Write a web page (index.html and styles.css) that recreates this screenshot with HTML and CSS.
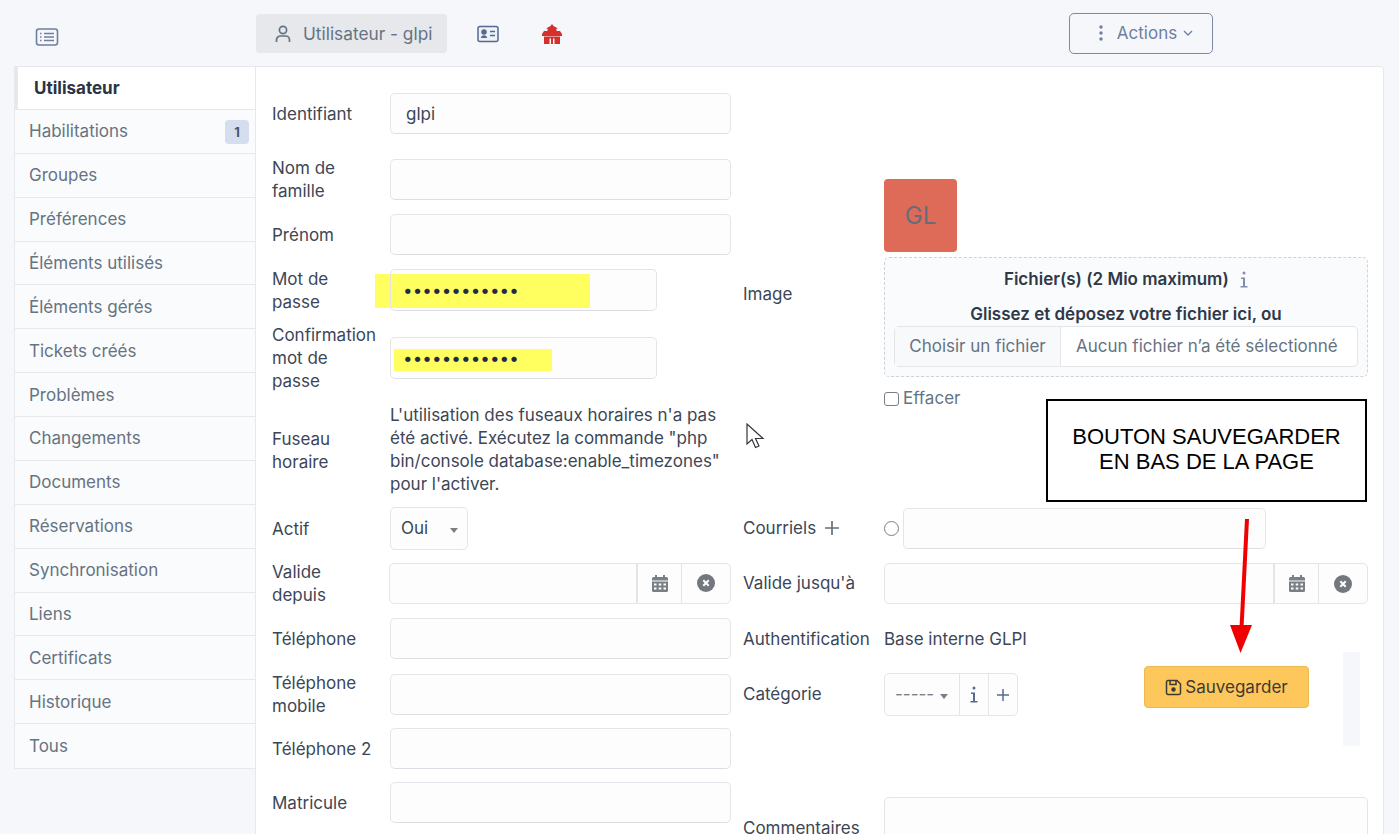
FILE: index.html
```html
<!DOCTYPE html>
<html lang="fr">
<head>
    <meta charset="UTF-8">
    <title>Utilisateur - glpi</title>
    <link rel="stylesheet" href="styles.css">
</head>
<body>

    <header class="topbar">
        <div class="topbar-toggle">
            <svg width="24" height="20" viewBox="0 0 24 20" fill="none" stroke="#6f7f9e" stroke-width="1.6">
                <rect x="1.5" y="2" width="21" height="16" rx="2.5"/>
                <path d="M5 6.5h1.5M5 10h1.5M5 13.5h1.5M9 6.5h10M9 10h10M9 13.5h10"/>
            </svg>
        </div>
        <div class="topbar-tab active">
            <svg width="18" height="20" viewBox="0 0 18 20" fill="none" stroke="#667382" stroke-width="1.7">
                <circle cx="9" cy="6" r="3.6"/>
                <path d="M2.5 18v-2a4 4 0 0 1 4-4h5a4 4 0 0 1 4 4v2"/>
            </svg>
            <span>Utilisateur - glpi</span>
        </div>
        <div class="topbar-tab">
            <svg width="22" height="18" viewBox="0 0 22 18" fill="#edf1f9" stroke="#566a8e" stroke-width="1.5">
                <rect x="1" y="1.5" width="20" height="15" rx="2"/>
                <circle cx="7" cy="7" r="2" fill="#566a8e"/>
                <path d="M3.8 13c.4-2 1.6-2.8 3.2-2.8s2.8.8 3.2 2.8z" fill="#566a8e" stroke="none"/>
                <path d="M13 6.5h5M13 10.5h5"/>
            </svg>
        </div>
        <div class="topbar-tab">
            <svg width="20" height="22" viewBox="0 0 20 22" fill="#d5302c">
                <path d="M10 1l1.500 2 4.500 2.500h-1.500v2.500h3.500l2 3v2h-20v-2l2-3h3.500v-2.500h-1.500l4.500-2.500z"/>
                <path fill-rule="evenodd" d="M2 13.500h16v7.500h-16zM7.500 15.500v5.500h1.500v-5.500zM11 15.500v5.500h1.500v-5.500z"/>
            </svg>
        </div>
        <button class="actions-btn" type="button">
            <svg width="4" height="16" viewBox="0 0 4 16" fill="#6f7f9e">
                <circle cx="2" cy="2" r="1.7"/><circle cx="2" cy="8" r="1.7"/><circle cx="2" cy="14" r="1.7"/>
            </svg>
            <span>Actions</span>
            <svg width="10" height="6" viewBox="0 0 10 6" fill="none" stroke="#6f7f9e" stroke-width="1.3">
                <path d="M1 1l4 4 4-4"/>
            </svg>
        </button>
    </header>

    <div class="layout">
        <nav class="sidebar">
            <a class="side-item active">Utilisateur</a>
            <a class="side-item">Habilitations <span class="badge">1</span></a>
            <a class="side-item">Groupes</a>
            <a class="side-item">Préférences</a>
            <a class="side-item">Éléments utilisés</a>
            <a class="side-item">Éléments gérés</a>
            <a class="side-item">Tickets créés</a>
            <a class="side-item">Problèmes</a>
            <a class="side-item">Changements</a>
            <a class="side-item">Documents</a>
            <a class="side-item">Réservations</a>
            <a class="side-item">Synchronisation</a>
            <a class="side-item">Liens</a>
            <a class="side-item">Certificats</a>
            <a class="side-item">Historique</a>
            <a class="side-item">Tous</a>
        </nav>

        <main class="panel">
            <div class="col col-left">
                <div class="row row-first">
                    <label>Identifiant</label>
                    <input type="text" value="glpi">
                </div>
                <div class="row row-name">
                    <label>Nom de famille</label>
                    <input type="text">
                </div>
                <div class="row">
                    <label>Prénom</label>
                    <input type="text">
                </div>
                <div class="row row-pw">
                    <label>Mot de passe</label>
                    <div class="pw-field">
                        <span class="marker marker-one"></span>
                        <input type="password" value="aaaaaaaaaaaa">
                    </div>
                </div>
                <div class="row">
                    <label>Confirmation mot de passe</label>
                    <div class="pw-field">
                        <span class="marker marker-two"></span>
                        <input type="password" value="aaaaaaaaaaaa">
                    </div>
                </div>
                <div class="row row-tz">
                    <label>Fuseau horaire</label>
                    <p class="tz-note">L'utilisation des fuseaux horaires n'a pas été activé. Exécutez la commande "php bin/console database:enable_timezones" pour l'activer.</p>
                </div>
                <div class="row">
                    <label>Actif</label>
                    <div class="select select-yes">Oui <i class="caret"></i></div>
                </div>
                <div class="row row-since">
                    <label>Valide depuis</label>
                    <div class="date-group date-left">
                        <div class="date-input"></div>
                        <div class="date-btn cal-btn">
                            <svg width="16" height="17" viewBox="0 0 16 17"><use href="#cal"/></svg>
                        </div>
                        <div class="date-btn clear-btn">
                            <svg width="18" height="18" viewBox="0 0 18 18"><use href="#clear"/></svg>
                        </div>
                    </div>
                </div>
                <div class="row">
                    <label>Téléphone</label>
                    <input type="text">
                </div>
                <div class="row row-mobile">
                    <label>Téléphone mobile</label>
                    <input type="text">
                </div>
                <div class="row">
                    <label>Téléphone 2</label>
                    <input type="text">
                </div>
                <div class="row row-number">
                    <label>Matricule</label>
                    <input type="text">
                </div>
            </div>

            <div class="col col-right">
                <div class="row row-image">
                    <label>Image</label>
                    <div class="image-box">
                        <div class="avatar">GL</div>
                        <div class="dropzone">
                            <div class="drop-title">Fichier(s) (2 Mio maximum)
                                <svg width="8" height="17" viewBox="0 0 8 17" fill="#7f8db0"><use href="#info"/></svg>
                            </div>
                            <div class="drop-text">Glissez et déposez votre fichier ici, ou</div>
                            <div class="file-input">
                                <span class="file-btn">Choisir un fichier</span>
                                <span class="file-name">Aucun fichier n’a été sélectionné</span>
                            </div>
                        </div>
                        <div class="clear-check"><span class="checkbox"></span>Effacer</div>
                    </div>
                </div>
                <div class="row row-mail">
                    <label>Courriels
                        <svg class="label-plus" width="16" height="16" viewBox="0 0 16 16" fill="none" stroke="#667382" stroke-width="1.7"><path d="M8 1v14M1 8h14"/></svg>
                    </label>
                    <div class="mail-field">
                        <span class="radio"></span>
                        <input type="text">
                    </div>
                </div>
                <div class="row row-until">
                    <label>Valide jusqu'à</label>
                    <div class="date-group">
                        <div class="date-input"></div>
                        <div class="date-btn cal-btn">
                            <svg width="16" height="17" viewBox="0 0 16 17"><use href="#cal"/></svg>
                        </div>
                        <div class="date-btn clear-btn">
                            <svg width="18" height="18" viewBox="0 0 18 18"><use href="#clear"/></svg>
                        </div>
                    </div>
                </div>
                <div class="row row-auth">
                    <label>Authentification</label>
                    <span>Base interne GLPI</span>
                </div>
                <div class="row row-cat">
                    <label>Catégorie</label>
                    <div class="cat-group">
                        <div class="cat-select">----- <i class="caret"></i></div>
                        <div class="cat-btn">
                            <svg width="8" height="17" viewBox="0 0 8 17" fill="#566a8e"><use href="#info"/></svg>
                        </div>
                        <div class="cat-btn">
                            <svg width="14" height="14" viewBox="0 0 14 14" fill="none" stroke="#566a8e" stroke-width="1.5"><path d="M7 1v12M1 7h12"/></svg>
                        </div>
                    </div>
                </div>
                <div class="row row-comment">
                    <label>Commentaires</label>
                    <textarea></textarea>
                </div>
            </div>

            <div class="save-strip"></div>
            <button class="save-btn" type="button">
                <svg width="17" height="17" viewBox="0 0 17 17" fill="none" stroke="#3d3a32" stroke-width="1.5">
                    <path d="M3 1.500h9l3.500 3.500v9a1.500 1.500 0 0 1-1.500 1.500h-11a1.500 1.500 0 0 1-1.500-1.500v-11a1.500 1.500 0 0 1 1.500-1.500z"/>
                    <circle cx="8.500" cy="10.500" r="1.500" fill="#3d3a32"/>
                    <path d="M5 1.500v4h6v-4"/>
                </svg>
                Sauvegarder
            </button>
        </main>
    </div>

    <!-- annotations added on top of the screenshot -->
    <div class="note">BOUTON SAUVEGARDER<br>EN BAS DE LA PAGE</div>
    <svg class="note-arrow" width="30" height="140" viewBox="0 0 30 140">
        <path d="M21 1L15.500 110" stroke="#f00000" stroke-width="4" fill="none"/>
        <path d="M4 107h22l-11.500 28z" fill="#f00000"/>
    </svg>
    <svg class="mouse-cursor" width="20" height="27" viewBox="0 0 20 27" fill="#fff" stroke="#33363c" stroke-width="1.2">
        <path d="M1 1v20l5-4.500 3.500 8 3.500-1.500-3.500-7.500h7.500z"/>
    </svg>

    <svg class="icon-defs" width="0" height="0">
        <defs>
            <g id="cal" fill="#7a7e85">
                <path d="M3 0h2v2h6v-2h2v2h1.500a1.500 1.500 0 0 1 1.500 1.500v2h-16v-2a1.500 1.500 0 0 1 1.500-1.500h1.500z"/>
                <path fill-rule="evenodd" d="M0 6.500h16v9a1.500 1.500 0 0 1-1.500 1.500h-13a1.500 1.500 0 0 1-1.500-1.500zM2 8.500v2h2.500v-2zM6.700 8.500v2h2.600v-2zM11.500 8.500v2h2.500v-2zM2 12.500v2h2.500v-2zM6.700 12.500v2h2.600v-2zM11.500 12.500v2h2.500v-2z"/>
            </g>
            <g id="clear">
                <circle cx="9" cy="9" r="9" fill="#74777d"/>
                <path d="M6.300 6.300l5.400 5.400M11.700 6.300l-5.400 5.400" stroke="#fff" stroke-width="2"/>
            </g>
            <g id="info">
                <circle cx="4" cy="2" r="1.500"/>
                <path d="M1 6.500h4v8.500h2.500v1.500h-7v-1.500h2.500v-7h-2z"/>
            </g>
        </defs>
    </svg>

</body>
</html>
```

FILE: styles.css
```css
html, body {
    height: 834px;
    overflow: hidden;
}

body {
    font-family: Inter, "Liberation Sans", sans-serif;
    font-size: 17px;
    line-height: 23px;
    margin: 0;
    padding: 0;
    background-color: #f5f7fb;
    color: #3c4657;
}

.topbar {
    display: flex;
    align-items: center;
    height: 66px;
    padding-right: 186px;
    box-sizing: border-box;
}

.topbar-toggle {
    width: 256px;
    padding: 8px 0 0 35px;
    box-sizing: border-box;
}

.topbar-toggle svg {
    display: block;
}

.topbar-tab {
    display: flex;
    align-items: center;
    gap: 11px;
    height: 39px;
    padding: 0 12px;
    margin-top: 1px;
    border-radius: 4px;
}

.topbar-tab.active {
    padding: 0 15px 0 18px;
    background-color: #e6e8ec;
    color: #667382;
    font-size: 17.3px;
    margin-right: 18px;
}

.topbar-tab + .topbar-tab {
    padding: 0 12px;
}

.topbar-tab + .topbar-tab + .topbar-tab {
    margin-left: 23px;
    padding: 0 8px;
}

.actions-btn {
    display: flex;
    align-items: center;
    justify-content: center;
    gap: 6px;
    width: 144px;
    height: 41px;
    padding: 0 0 0 10px;
    margin-left: auto;
    background: transparent;
    border: 1.5px solid #7c89a8;
    border-radius: 5px;
    font: inherit;
    color: #6f7f9e;
}

.actions-btn span {
    margin-left: 8px;
}

.layout {
    display: flex;
    padding: 0 15px 0 14px;
}

.sidebar {
    display: grid;
    grid-template-rows: 43px repeat(15, 1fr);
    flex: 0 0 241px;
    height: 703px;
    border: 1px solid #e6e8ee;
    border-right: none;
    box-sizing: border-box;
    background-color: #fafbfd;
}

.side-item {
    display: flex;
    align-items: center;
    justify-content: space-between;
    padding: 1px 6px 0 14px;
    border-bottom: 1px solid #e6e8ee;
    color: #667382;
}

.side-item:last-child {
    border-bottom: none;
}

.side-item.active {
    background-color: #fff;
    border-left: 4px solid #e6e8ee;
    padding-top: 0;
    padding-left: 16px;
    margin-left: -1px;
    font-weight: 700;
    color: #2a3345;
}

.badge {
    width: 24px;
    height: 24px;
    line-height: 24px;
    text-align: center;
    font-size: 13px;
    font-weight: 700;
    border-radius: 4px;
    background-color: #d5deef;
    color: #4b5670;
}

.panel {
    position: relative;
    flex: 1;
    display: flex;
    gap: 12px;
    height: 900px;
    padding: 26px 15px 0 16px;
    background-color: #fff;
    border: 1px solid #e6e8ee;
    border-radius: 0 4px 0 0;
    box-sizing: border-box;
}

.col {
    display: flex;
    flex-direction: column;
    gap: 11px;
}

.col-left {
    flex: 0 0 459px;
}

.col-right {
    flex: 1;
    padding-top: 86px;
}

.row {
    display: flex;
    align-items: center;
}

.row label {
    flex: 0 0 118px;
    box-sizing: border-box;
    padding-right: 12px;
}

.col-left .row label {
    padding-top: 1px;
    margin-bottom: -1px;
}

.col-right .row label {
    flex-basis: 141px;
    padding-right: 0;
}

.row-first {
    margin-bottom: 11px;
}

.row-name {
    margin-bottom: 1px;
}

.row-pw {
    margin-top: 1px;
    margin-bottom: -1px;
}

.row-tz {
    margin-top: 1px;
}

.row-since {
    margin-top: -1px;
    margin-bottom: 1px;
}

.row-mobile {
    margin-top: 1px;
}

.row-number {
    margin-top: 2px;
}

.row input[type="text"],
.row input[type="password"],
.row textarea {
    flex: 1;
    width: 100%;
    height: 41px;
    padding: 0 15px;
    box-sizing: border-box;
    font: inherit;
    color: #3c4657;
    background-color: #fdfdfe;
    border: 1px solid #e3e5e9;
    border-bottom-color: #dcdee3;
    border-radius: 5px;
    outline: none;
}

.pw-field {
    position: relative;
    width: 267px;
    height: 42px;
    background-color: #fdfdfe;
    border-radius: 5px;
}

.row .pw-field input[type="password"] {
    position: relative;
    height: 42px;
    background-color: transparent;
    padding-left: 12px;
    letter-spacing: 0.1px;
    color: #1f2a44;
}

.marker {
    position: absolute;
    background-color: #ffff5f;
}

.marker-one {
    left: -15px;
    top: 5px;
    width: 215px;
    height: 34px;
}

.marker-two {
    left: 4px;
    top: 12px;
    width: 158px;
    height: 22px;
}

.tz-note {
    flex: 1;
    margin: 0;
}

.select {
    display: flex;
    align-items: center;
    justify-content: space-between;
    box-sizing: border-box;
    height: 43px;
    border: 1px solid #e3e5e9;
    border-radius: 5px;
    background-color: #fdfdfe;
}

.select-yes {
    width: 78px;
    padding: 0 9px 0 10px;
}

.caret {
    display: inline-block;
    width: 0;
    height: 0;
    border-left: 4.5px solid transparent;
    border-right: 4.5px solid transparent;
    border-top: 5px solid #7a7e85;
    margin-top: 3px;
}

.date-group {
    flex: 1;
    display: flex;
    height: 41px;
    box-sizing: border-box;
    border: 1px solid #e3e5e9;
    border-radius: 5px;
    background-color: #fdfdfe;
}

.date-left {
    margin-left: -1px;
}

.date-input {
    flex: 1;
}

.date-btn {
    display: flex;
    align-items: center;
    justify-content: center;
    border-left: 1px solid #e3e5e9;
    box-sizing: border-box;
}

.cal-btn {
    width: 45px;
    border-left-width: 2px;
}

.clear-btn {
    width: 49px;
}

.date-btn svg,
.cat-btn svg {
    display: block;
}

.image-box {
    flex: 1;
}

.avatar {
    display: flex;
    align-items: center;
    justify-content: center;
    width: 73px;
    height: 73px;
    border-radius: 4px;
    background-color: #de6b57;
    color: #666d78;
    font-size: 24px;
}

.dropzone {
    margin-top: 5px;
    height: 120px;
    padding: 10px 9px 0;
    box-sizing: border-box;
    border: 1px dashed #cfd2d8;
    border-radius: 5px;
    background-color: #fafbfc;
    text-align: center;
    font-weight: 600;
    color: #2f3848;
}

.drop-title svg {
    margin-left: 7px;
    vertical-align: -3px;
}

.drop-text {
    margin-top: 12px;
}

.file-input {
    display: flex;
    height: 41px;
    box-sizing: border-box;
    border: 1px solid #e3e5e9;
    border-radius: 5px;
    background-color: #fff;
    font-weight: 400;
    color: #667382;
    line-height: 39px;
}

.file-btn {
    width: 166px;
    background-color: #f8f9fb;
    border-right: 1px solid #e3e5e9;
    box-sizing: border-box;
}

.file-name {
    flex: 1;
    padding-left: 15px;
    text-align: left;
}

.clear-check {
    display: flex;
    align-items: center;
    gap: 4px;
    margin-top: 10px;
    color: #667382;
}

.checkbox {
    width: 15px;
    height: 14px;
    box-sizing: border-box;
    border: 1px solid #7a7e85;
    border-radius: 3px;
    background-color: #fff;
}

.row-mail {
    margin-top: 87px;
}

.row-until {
    margin-top: 3px;
}

.label-plus {
    margin-left: 3px;
    vertical-align: -2px;
}

.mail-field {
    display: flex;
    align-items: center;
    gap: 4px;
    width: 382px;
}

.radio {
    flex: 0 0 15px;
    height: 15px;
    box-sizing: border-box;
    border: 1px solid #7a7e85;
    border-radius: 50%;
}

.row-auth {
    margin-top: 13px;
}

.row-cat {
    margin-top: 11px;
}

.cat-group {
    display: flex;
    width: 134px;
    height: 43px;
    box-sizing: border-box;
    border: 1px solid #e3e5e9;
    border-radius: 5px;
    background-color: #fdfdfe;
}

.cat-select {
    display: flex;
    align-items: center;
    gap: 6px;
    width: 74px;
    padding-left: 10px;
    box-sizing: border-box;
    color: #7a7e85;
}

.cat-btn {
    flex: 1;
    display: flex;
    align-items: center;
    justify-content: center;
    border-left: 1px solid #e3e5e9;
}

.row-comment {
    margin-top: 70px;
}

.row textarea {
    height: 62px;
    display: block;
    resize: none;
}

.save-strip {
    position: absolute;
    left: 1087px;
    top: 585px;
    width: 17px;
    height: 94px;
    background-color: #f5f7fb;
}

.save-btn {
    position: absolute;
    left: 888px;
    top: 599px;
    display: flex;
    align-items: center;
    justify-content: center;
    gap: 3px;
    width: 165px;
    height: 42px;
    background-color: #fdc75c;
    border: 1px solid #eeb94f;
    border-radius: 4px;
    font: inherit;
    color: #3d3a32;
}

.note {
    position: absolute;
    left: 1046px;
    top: 399px;
    width: 321px;
    height: 103px;
    padding-top: 23px;
    box-sizing: border-box;
    border: 2px solid #000;
    background-color: #fff;
    font-family: "Liberation Sans", Arial, sans-serif;
    font-size: 22px;
    line-height: 25px;
    text-align: center;
    color: #000;
}

.note-arrow {
    position: absolute;
    left: 1226px;
    top: 518px;
}

.mouse-cursor {
    position: absolute;
    left: 746px;
    top: 423px;
}

.icon-defs {
    position: absolute;
}
```
